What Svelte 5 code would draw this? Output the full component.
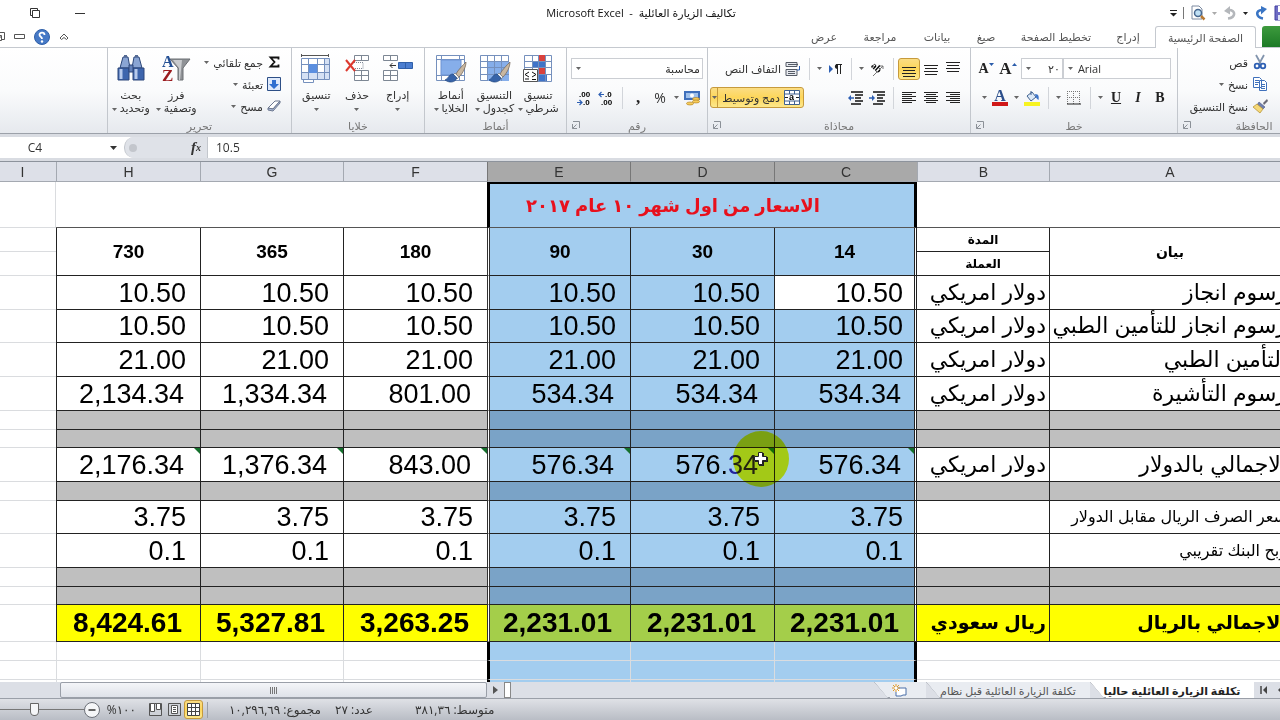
<script lang="ts">
	type Kind = 'data' | 'sum' | 'small' | 'gap' | 'total';
	type Row = { h: number; kind: Kind; label?: string; unit?: string; values?: string[]; flag?: boolean };

	const columns = [
		{ name: 'A', width: 241 },
		{ name: 'B', width: 132 },
		{ name: 'C', width: 143, selected: true },
		{ name: 'D', width: 144, selected: true },
		{ name: 'E', width: 143, selected: true },
		{ name: 'F', width: 144 },
		{ name: 'G', width: 143 },
		{ name: 'H', width: 144 }
	];

	const days = ['14', '30', '90', '180', '365', '730'];
	const usd = 'دولار امريكي';

	const rows: Row[] = [
		{ h: 34, kind: 'data', label: 'رسوم انجاز', unit: usd, values: Array(6).fill('10.50') },
		{ h: 33, kind: 'data', label: 'رسوم انجاز للتأمين الطبي', unit: usd, values: Array(6).fill('10.50') },
		{ h: 34, kind: 'data', label: 'التأمين الطبي', unit: usd, values: Array(6).fill('21.00') },
		{
			h: 34,
			kind: 'sum',
			label: 'رسوم التأشيرة',
			unit: usd,
			values: ['534.34', '534.34', '534.34', '801.00', '1,334.34', '2,134.34']
		},
		{ h: 19, kind: 'gap' },
		{ h: 18, kind: 'gap' },
		{
			h: 34,
			kind: 'sum',
			label: 'الاجمالي بالدولار',
			unit: usd,
			values: ['576.34', '576.34', '576.34', '843.00', '1,376.34', '2,176.34'],
			flag: true
		},
		{ h: 19, kind: 'gap' },
		{ h: 33, kind: 'small', label: 'سعر الصرف الريال مقابل الدولار', values: Array(6).fill('3.75') },
		{ h: 34, kind: 'small', label: 'ربح البنك تقريبي', values: Array(6).fill('0.1') },
		{ h: 19, kind: 'gap' },
		{ h: 18, kind: 'gap' },
		{
			h: 37,
			kind: 'total',
			label: 'الاجمالي بالريال',
			unit: 'ريال سعودي',
			values: ['2,231.01', '2,231.01', '2,231.01', '3,263.25', '5,327.81', '8,424.61']
		}
	];

	const tabs = [
		{ label: 'إدراج', width: 54 },
		{ label: 'تخطيط الصفحة', width: 90 },
		{ label: 'صيغ', width: 50 },
		{ label: 'بيانات', width: 48 },
		{ label: 'مراجعة', width: 66 },
		{ label: 'عرض', width: 46 }
	];

	let zoom = $state(48);
</script>

{#snippet caret()}
	<svg class="caret" width="5" height="3" viewBox="0 0 5 3"><path d="M0 0h5L2.5 3z" fill="currentColor" /></svg>
{/snippet}

{#snippet launcher()}
	<button class="launcher" aria-label="خيارات">
		<svg width="8" height="8" viewBox="0 0 8 8" fill="none" stroke="#8b9097"><path d="M1 .5h6.500V7M.5 3v4.500H5M.5 7.500 4.500 3.500" /></svg>
	</button>
{/snippet}

{#snippet lines(ends: number[][])}
	<svg width="16" height="16" viewBox="0 0 16 16" stroke="#222" stroke-width="1">
		{#each ends as [x1, x2, y]}
			<path d="M{x1} {y}.5H{x2}" />
		{/each}
	</svg>
{/snippet}

{#snippet slant()}
	<svg class="slant" width="16" height="16" viewBox="0 0 16 16"><path d="M0 0l13 15.500h3" fill="none" stroke="#9a9fa8" /></svg>
{/snippet}

{#snippet brush()}
	<path d="M31 8c-3 3-8 8-10 12l3 3c4-4 7-10 7-15z" fill="#c9b7a0" stroke="#6e6255" stroke-width=".7" />
	<path d="m20 19 4 4-2 2-4-4z" fill="#eee" stroke="#777" stroke-width=".7" />
	<path d="M18 20c-4 0-4 4-8 6 4 3 10 3 12-2z" fill="#3763a8" stroke="#234780" stroke-width=".7" />
{/snippet}

<div class="window" dir="rtl">
	<header class="titlebar">
		<div class="quick">
			<button aria-label="حفظ">
				<svg width="16" height="16" viewBox="0 0 16 16"><path d="M1 1h14v14H1z" fill="#6d6bc4" stroke="#4341a0" /><path d="M4 1h8v6H4z" fill="#fff" /><path d="M4 10h7v5H4z" fill="#dfe3f7" /></svg>
			</button>
			<button aria-label="إعادة">
				<svg width="14" height="14" viewBox="0 0 14 14"><path d="M9 12.500C2 11.500 1 4 8 4" fill="none" stroke="#3a75c4" stroke-width="2.600" /><path d="M7 0v8.500L13 3z" fill="#3a75c4" /></svg>
			</button>
			{@render caret()}
			<button aria-label="تراجع">
				<svg width="14" height="14" viewBox="0 0 14 14"><path d="M5 12.500C13 11.500 13 4 6 4" fill="none" stroke="#b4b7bb" stroke-width="2.600" /><path d="M7 0v8.500L1 5z" fill="#b4b7bb" /></svg>
			</button>
			<span class="faint">{@render caret()}</span>
			<button aria-label="معاينة قبل الطباعة">
				<svg width="16" height="16" viewBox="0 0 16 16"><path d="M2 1h7l3 3v10H2z" fill="#fff" stroke="#7c8aa0" /><circle cx="8" cy="8" r="3.500" fill="#bfe0f5" stroke="#46678f" stroke-width="1.500" /><path d="m11 11 3.500 3.500" stroke="#b87932" stroke-width="2.500" /></svg>
			</button>
			<i class="bar"></i>
			<button aria-label="تخصيص">
				<svg width="7" height="7" viewBox="0 0 7 7"><path d="M0 .5h7" stroke="#222" /><path d="M0 3h7L3.500 6.500z" fill="#222" /></svg>
			</button>
		</div>
		<h1>تكاليف الزيارة العائلية &nbsp;-&nbsp; <bdi>Microsoft Excel</bdi></h1>
		<div class="controls">
			<button aria-label="تصغير"><svg width="10" height="10" viewBox="0 0 10 10"><path d="M0 5.500h10" stroke="#333" /></svg></button>
			<button aria-label="استعادة"><svg width="10" height="10" viewBox="0 0 10 10" fill="none" stroke="#333"><path d="M2.500 2.500h7v7h-7z" /><path d="M2 7.500H.5v-7h7V2" /></svg></button>
		</div>
	</header>

	<nav class="tabs">
		<button class="file">ملف</button>
		<button class="home">الصفحة الرئيسية</button>
		{#each tabs as tab}
			<button style="width: {tab.width}px">{tab.label}</button>
		{/each}
		<div class="help">
			<button aria-label="طي الشريط"><svg width="10" height="8" viewBox="0 0 10 8" fill="#fff" stroke="#555"><path d="m1 5 4-4 4 4-1.500 1.500L5 4.500 2.500 6.500z" /></svg></button>
			<button aria-label="تعليمات">
				<svg width="16" height="16" viewBox="0 0 16 16"><circle cx="8" cy="8" r="7.500" fill="#4679c6" stroke="#2f5fa8" /><path d="M10.500 6C10.500 3 5.500 3 5.500 5.800 5.500 8 8 7.500 8 10" fill="none" stroke="#fff" stroke-width="1.800" /><circle cx="8" cy="12.500" r="1.200" fill="#fff" /></svg>
			</button>
			<button aria-label="تصغير المصنف"><svg width="11" height="5" viewBox="0 0 11 5" fill="#fff" stroke="#555"><path d="M.5.5h10v4H.5z" /></svg></button>
			<button aria-label="استعادة المصنف"><svg width="10" height="10" viewBox="0 0 10 10" fill="#fff" stroke="#555"><path d="M2.500.5h7v7h-7z" /><path d="M.5 3.500h6v5h-6zM5 3v3" /></svg></button>
		</div>
	</nav>

	<div class="ribbon">
		<section class="group clipboard">
			<div class="tools">
				<button class="paste" aria-label="لصق"></button>
				<div class="stack">
					<button class="item">
						<svg width="16" height="16" viewBox="0 0 16 16" fill="none"><path d="m4 1 5 9M12 1 7 10" stroke="#8294ad" stroke-width="1.800" /><circle cx="5" cy="12" r="2.300" stroke="#2d5fb3" stroke-width="1.800" /><circle cx="11" cy="12" r="2.300" stroke="#2d5fb3" stroke-width="1.800" /></svg>
						قص
					</button>
					<button class="item">
						<svg width="16" height="16" viewBox="0 0 16 16" fill="#fff" stroke="#3f70bb"><path d="M1.500 1.500h6l2 2v8h-8zM7.500 4.500h5l2 2v8h-7z" /><path d="M3 4.500h4M3 6.500h4M3 8.500h3M9 8.500h4M9 10.500h4M9 12.500h4" /></svg>
						نسخ {@render caret()}
					</button>
					<button class="item">
						<svg width="16" height="16" viewBox="0 0 16 16"><path d="m11 5 4-4 1 2-4 4z" fill="#6b6a75" /><path d="m7 4 6 5-2 2-6-4z" fill="#6f7fae" stroke="#4a5685" stroke-width=".6" /><path d="m5 6 6 5-3 4-7-6z" fill="#f5d876" stroke="#b08d2c" stroke-width=".7" /></svg>
						نسخ التنسيق
					</button>
				</div>
			</div>
			<footer>الحافظة{@render launcher()}</footer>
		</section>

		<section class="group font">
			<div class="tools rows">
				<div class="row">
					<label class="combo name"><select dir="ltr" aria-label="الخط"><option>Arial</option></select>{@render caret()}</label>
					<label class="combo size"><select aria-label="حجم الخط"><option>٢٠</option></select>{@render caret()}</label>
					<button class="tool serif big" dir="ltr" aria-label="تكبير الخط">A<svg width="5" height="3" viewBox="0 0 5 3"><path d="M0 3h5L2.500 0z" fill="#2b5dab" /></svg></button>
					<button class="tool serif" dir="ltr" aria-label="تصغير الخط">A<svg width="5" height="3" viewBox="0 0 5 3"><path d="M0 0h5L2.500 3z" fill="#2b5dab" /></svg></button>
				</div>
				<div class="row">
					<button class="tool serif">B</button>
					<button class="tool serif"><em>I</em></button>
					<button class="tool serif"><u>U</u></button>
					<span class="drop">{@render caret()}</span>
					<i class="sep"></i>
					<button class="tool" aria-label="حدود">
						<svg width="14" height="14" viewBox="0 0 14 14" fill="none" stroke="#777" stroke-dasharray="1 1"><path d="M.5 0v13M6.500 0v13M12.500 0v13M0 .5h13M0 6.500h13" /><path d="M0 13h14" stroke="#222" stroke-dasharray="none" /></svg>
					</button>
					<span class="drop">{@render caret()}</span>
					<i class="sep"></i>
					<button class="tool" aria-label="لون التعبئة">
						<svg width="16" height="16" viewBox="0 0 16 16"><path d="M3 6 8 2l4 5-5 4z" fill="#dce9f7" stroke="#40618f" /><path d="M7 5V1" stroke="#40618f" /><path d="M11 4c4 0 4 3 3.500 6-2-1-3-3-3.500-6z" fill="#3c74c8" /><path d="M0 12h16v4H0z" fill="#f7f321" /></svg>
					</button>
					<span class="drop">{@render caret()}</span>
					<button class="tool colour" aria-label="لون الخط">A</button>
					<span class="drop">{@render caret()}</span>
				</div>
			</div>
			<footer>خط{@render launcher()}</footer>
		</section>

		<section class="group align">
			<div class="tools">
				<div class="rows">
					<div class="row">
						<button class="tool" aria-label="محاذاة للأعلى">{@render lines([[1, 15, 1], [2, 14, 4], [1, 15, 7], [2, 14, 10]])}</button>
						<button class="tool" aria-label="محاذاة للوسط">{@render lines([[1, 15, 4], [2, 14, 7], [1, 15, 10], [2, 14, 13]])}</button>
						<button class="tool active" aria-label="محاذاة للأسفل">{@render lines([[1, 15, 6], [2, 14, 9], [1, 15, 12], [2, 14, 15]])}</button>
						<i class="sep"></i>
						<button class="tool" aria-label="الاتجاه"><svg width="16" height="16" viewBox="0 0 16 16"><text x="1" y="9" font-size="10" font-weight="700" font-family="Liberation Serif" transform="rotate(42 6 8)">ab</text><path d="m4 15 10-10M14 5v3M14 5h-3" stroke="#777" fill="none" /></svg></button>
						<span class="drop">{@render caret()}</span>
						<i class="sep"></i>
						<button class="tool" aria-label="اتجاه النص"><svg width="16" height="16" viewBox="0 0 16 16"><path d="M2 4v8l4-4z" fill="#2d5fb3" /><path d="M10.500 3v10M13.500 3v10M9 3.500h6" stroke="#222" /><path d="M10.500 3C7 3 7 8 10.500 8z" fill="#222" /></svg></button>
						<span class="drop">{@render caret()}</span>
						<i class="sep"></i>
					</div>
					<div class="row">
						<button class="tool" aria-label="يمين">{@render lines([[1, 15, 2], [5, 15, 4], [1, 15, 6], [5, 15, 8], [1, 15, 10], [5, 15, 12]])}</button>
						<button class="tool" aria-label="توسيط">{@render lines([[1, 15, 2], [3, 13, 4], [1, 15, 6], [3, 13, 8], [1, 15, 10], [3, 13, 12]])}</button>
						<button class="tool" aria-label="يسار">{@render lines([[1, 15, 2], [1, 11, 4], [1, 15, 6], [1, 11, 8], [1, 15, 10], [1, 11, 12]])}</button>
						<i class="sep"></i>
						<button class="tool" aria-label="إنقاص المسافة"><svg width="16" height="14" viewBox="0 0 16 14" stroke="#111" stroke-width="1.500"><path d="M4 1h12M8 4h8M8 7h6M8 10h8M4 13h10" /><path d="M0 7h3" stroke="#2d5fb3" /><path d="m3 4 3 3-3 3z" fill="#2d5fb3" stroke="none" /></svg></button>
						<button class="tool" aria-label="زيادة المسافة"><svg width="16" height="14" viewBox="0 0 16 14" stroke="#111" stroke-width="1.500"><path d="M4 1h12M8 4h8M8 7h6M8 10h8M4 13h10" /><path d="M3 7h4" stroke="#2d5fb3" /><path d="M4 4 1 7l3 3z" fill="#2d5fb3" stroke="none" /></svg></button>
					</div>
				</div>
				<div class="rows wide">
					<button class="item">
						<svg width="16" height="16" viewBox="0 0 16 16"><path d="M1 1.500h11v4H1zM1 8.500h11v6H1z" fill="#e8ebf0" stroke="#555b66" /><path d="M3 3.500h10M3 10.500h7M3 12.500h7" stroke="#555b66" /><path d="M14.500 5v4H12" fill="none" stroke="#2d5fb3" /></svg>
						التفاف النص
					</button>
					<button class="item active">
						<svg width="16" height="16" viewBox="0 0 16 16"><path d="M.5.5h15v14H.5z" fill="#fff" stroke="#40618f" /><path d="M.5 4h15M.5 11h15M5.500 1v3M10.500 1v3M5.500 11v4M10.500 11v4" stroke="#40618f" /><path d="M1 7.500h3M12 7.500h3" stroke="#222" /><text x="5" y="10" font-size="9" font-weight="700" font-family="Liberation Sans">a</text></svg>
						دمج وتوسيط
						<span class="split">{@render caret()}</span>
					</button>
				</div>
			</div>
			<footer>محاذاة{@render launcher()}</footer>
		</section>

		<section class="group number">
			<div class="tools rows">
				<label class="combo format"><select aria-label="تنسيق الأرقام"><option>محاسبة</option></select>{@render caret()}</label>
				<div class="row">
					<button class="tool" aria-label="تنسيق العملة"><svg width="16" height="16" viewBox="0 0 16 16"><path d="M0 1h16v9H0z" fill="#3f6fbb" /><path d="M2 3h12v5H2z" fill="#9fc0ea" /><circle cx="8" cy="5.500" r="2" fill="#fff" /><ellipse cx="12" cy="9" rx="3.500" ry="1.500" fill="#f7cc5b" stroke="#a97918" stroke-width=".6" /><ellipse cx="12" cy="11.500" rx="3.500" ry="1.500" fill="#f7cc5b" stroke="#a97918" stroke-width=".6" /><ellipse cx="6" cy="13.500" rx="3.500" ry="1.500" fill="#f7cc5b" stroke="#a97918" stroke-width=".6" /></svg></button>
					<span class="drop">{@render caret()}</span>
					<button class="tool percent">%</button>
					<button class="tool serif big">,</button>
					<i class="sep"></i>
					<button class="tool" aria-label="زيادة المنازل العشرية">
						<svg width="18" height="16" viewBox="0 0 18 16"><path d="M7 4.500H2M4.500 2 2 4.500 4.500 7" fill="none" stroke="#2d5fb3" stroke-width="1.200" /><text x="8" y="7" font-size="8" font-weight="700" font-family="Liberation Sans">.0</text><text x="4" y="15" font-size="8" font-weight="700" font-family="Liberation Sans">.00</text></svg>
					</button>
					<button class="tool" aria-label="إنقاص المنازل العشرية">
						<svg width="18" height="16" viewBox="0 0 18 16"><path d="M2 12.500h5M4.500 10 7 12.500 4.500 15" fill="none" stroke="#2d5fb3" stroke-width="1.200" /><text x="4" y="7" font-size="8" font-weight="700" font-family="Liberation Sans">.00</text><text x="8" y="15" font-size="8" font-weight="700" font-family="Liberation Sans">.0</text></svg>
					</button>
				</div>
			</div>
			<footer>رقم{@render launcher()}</footer>
		</section>

		<section class="group styles">
			<div class="tools">
				<button class="large">
					<svg width="30" height="30" viewBox="0 0 30 30"><path d="M1.500 1.500h27v26h-27z" fill="#fff" stroke="#7590bd" /><path d="M16 1h6v6h-6zM16 14h6v6h-6z" fill="#d9413c" /><path d="M9 8h13v6H9zM16 20h8v7h-8z" fill="#3f74c9" /><path d="M1 7.500h28M1 13.500h28M1 20.500h28M9.500 1v27M15.500 1v27M22.500 1v27" stroke="#7590bd" fill="none" /><path d="M.5 15.500h14v12H.5z" fill="#fff" stroke="#555" /><path d="m6 18-4 2.500L6 23M2 25h4M9 18l4 2.500L9 23M9 25.500h4" fill="none" stroke="#111" /></svg>
					<span>تنسيق<br />شرطي {@render caret()}</span>
				</button>
				<button class="large">
					<svg width="32" height="30" viewBox="0 0 32 30"><path d="M1.500 1.500h28v25h-28z" fill="#fff" stroke="#7590bd" /><path d="M8 7h22v20H8z" fill="#86aeea" /><path d="M1 7.500h29M1 13.500h29M1 20.500h29M8.500 1v26M15.500 1v26M22.500 1v26" stroke="#7590bd" />{@render brush()}</svg>
					<span>التنسيق<br />كجدول {@render caret()}</span>
				</button>
				<button class="large">
					<svg width="32" height="30" viewBox="0 0 32 30"><path d="M1.500 1.500h28v25h-28z" fill="#fff" stroke="#7590bd" /><path d="M1 5.500h29M1 21.500h29M6.500 1v26M24.500 1v26" stroke="#7590bd" /><path d="M6 6h20v15H6z" fill="#86aeea" stroke="#6c92d2" />{@render brush()}</svg>
					<span>أنماط<br />الخلايا {@render caret()}</span>
				</button>
			</div>
			<footer>أنماط</footer>
		</section>

		<section class="group cells">
			<div class="tools">
				<button class="large">
					<svg width="30" height="30" viewBox="0 0 30 30" fill="#fff" stroke="#7d8794"><path d="M.5 1.500h14v5H.5zM7.500 1.500v5M.5 16.500h14v10H.5zM7.500 16.500v10M.5 21.500h14" /><path d="M15.500 8.500h14v6h-14zM22.500 8v6" fill="#4a7dd0" stroke="#2f5fa8" /><path d="M13 11.500H7M9.500 9 7 11.500 9.500 14" fill="none" stroke="#333" /></svg>
					<span>إدراج<br />{@render caret()}</span>
				</button>
				<button class="large">
					<svg width="26" height="30" viewBox="0 0 26 30" fill="#fff" stroke="#7d8794"><path d="M10.500 1.500h14v5h-14zM17.500 1.500v5M10.500 16.500h14v10h-14zM17.500 16.500v10M10.500 21.500h14" /><path d="M10 8.500h9v6h-9" stroke-dasharray="1 1" /><path d="m2 6 9 11M11 6 2 17" stroke="#dd3a30" stroke-width="2" /></svg>
					<span>حذف<br />{@render caret()}</span>
				</button>
				<button class="large">
					<svg width="32" height="30" viewBox="0 0 32 30" fill="#fff" stroke="#7590bd"><path d="M1.500 4.500h28v21h-28zM3.500 25.500v3h10v-3" /><path d="M24 5h5v20h-5zM2 19h27v6H2z" fill="#d5e1f4" stroke="none" /><path d="M1 10.500h28M1 18.500h28M8.500 4v22M17.500 4v22M24.500 4v22" /><path d="M9 10h8v9H9z" fill="#5b8fe0" stroke="none" /><path d="M2 1.500h26M1.500 0v3M28.500 0v3" stroke="#555" /></svg>
					<span>تنسيق<br />{@render caret()}</span>
				</button>
			</div>
			<footer>خلايا</footer>
		</section>

		<section class="group editing">
			<div class="tools">
				<div class="stack">
					<button class="item">
						<svg width="14" height="14" viewBox="0 0 14 14"><path d="M11.500 4.500V2.500H3.500L7.500 7l-4 4.500h8v-2" fill="none" stroke="#111" stroke-width="1.800" /></svg>
						جمع تلقائي {@render caret()}
					</button>
					<button class="item">
						<svg width="14" height="14" viewBox="0 0 14 14"><path d="M.5.5h13v13H.5z" fill="#dfeafb" stroke="#2d4f86" /><path d="M5 3h4v4h3l-5 5-5-5h3z" fill="#2f6fd0" /></svg>
						تعبئة {@render caret()}
					</button>
					<button class="item">
						<svg width="14" height="14" viewBox="0 0 14 14"><path d="m1 9 7-7h5l-7 8z" fill="#fff" stroke="#6d7890" /><path d="M1 9v2l5 1 7-8V2L6 10z" fill="#a9b8d6" stroke="#6d7890" /></svg>
						مسح {@render caret()}
					</button>
				</div>
				<button class="large">
					<svg width="30" height="30" viewBox="0 0 30 30"><path d="M9 5h20l-7 9v12h-5V14z" fill="#8f9296" stroke="#6b6e72" /><path d="M12 6h9l-2 20h-1V14z" fill="#c9cbce" /><text x="1" y="13" font-size="16" font-weight="700" font-family="Liberation Serif" fill="#234f94">A</text><text x="1" y="27" font-size="17" font-weight="700" font-family="Liberation Serif" fill="#9b1b1f">Z</text></svg>
					<span>فرز<br />وتصفية {@render caret()}</span>
				</button>
				<button class="large">
					<svg width="28" height="30" viewBox="0 0 28 30" stroke="#2c477a"><path d="M6 3h5l2 11H3zM17 3h5l3 11H15z" fill="#8aa5d4" /><path d="M1 14h11v12H1zM16 14h11v12H16z" fill="#3d65ad" /><path d="M12 11h4v7h-4z" fill="#6482bb" /><path d="M4 15v10M19 15v10" stroke="#b7caec" stroke-width="3" /><path d="M7 2h3M18 2h3" stroke="#566b94" stroke-width="2" /></svg>
					<span>بحث<br />وتحديد {@render caret()}</span>
				</button>
			</div>
			<footer>تحرير</footer>
		</section>
	</div>

	<div class="formula" dir="ltr">
		<input class="cellname" value="C4" aria-label="مربع الاسم" />
		<button class="namedrop" aria-label="الأسماء"><svg width="7" height="4" viewBox="0 0 7 4"><path d="M0 0h7L3.500 4z" fill="#333" /></svg></button>
		<div class="fx"><i class="knob"></i><button aria-label="إدراج دالة">f<sub>x</sub></button></div>
		<input class="value" value="10.5" aria-label="شريط الصيغة" />
	</div>

	<main class="sheet">
		<table>
			<colgroup>
				<col class="rownum" />
				{#each columns as col}
					<col style="width: {col.width}px" />
				{/each}
				<col />
			</colgroup>
			<thead>
				<tr>
					<th></th>
					{#each columns as col}
						<th class:picked={col.selected}>{col.name}</th>
					{/each}
					<th>I</th>
				</tr>
			</thead>
			<tbody>
				<tr class="top">
					<th>1</th>
					<td colspan="2" class="under"></td>
					<td colspan="3" class="under sel caption first last solid">الاسعار من اول شهر ١٠ عام ٢٠١٧</td>
					<td colspan="3" class="under"></td>
					<td class="free edge"></td>
				</tr>
				<tr class="half">
					<th>2</th>
					<td rowspan="2" class="box head">بيان</td>
					<td class="box unit head sub">المدة</td>
					{#each days as day, i}
						<td rowspan="2" class="box days" class:sel={i < 3} class:first={i === 0} class:last={i === 2}>{day}</td>
					{/each}
					<td class="free"></td>
				</tr>
				<tr class="half">
					<th>3</th>
					<td class="box unit head sub">العملة</td>
					<td class="free"></td>
				</tr>
				{#each rows as row, r}
					<tr class={row.kind} style="height: {row.h}px">
						<th>{r + 4}</th>
						<td class="box text">{row.label ?? ''}</td>
						<td class="box unit text">{row.unit ?? ''}</td>
						{#each days as _, i}
							<td
								class="box num"
								class:sel={i < 3}
								class:first={i === 0}
								class:last={i === 2}
								class:current={r === 0 && i === 0}
								class:flag={row.flag}
							>
								{#if row.flag && i === 1}576.<span class="lit">34</span>{:else}{row.values?.[i] ?? ''}{/if}
							</td>
						{/each}
						<td class="free"></td>
					</tr>
				{/each}
				{#each [17, 18, 19] as n}
					<tr class="blank">
						<th>{n}</th>
						<td class="free"></td>
						<td class="free edge unit"></td>
						{#each days as _, i}
							<td class="free edge" class:sel={i < 3} class:solid={i < 3} class:first={i === 0} class:last={i === 2}></td>
						{/each}
						<td class="free edge"></td>
					</tr>
				{/each}
			</tbody>
		</table>
		<i class="halo"></i>
		<svg class="cursor" width="16" height="16" viewBox="0 0 16 16"><path d="M6 2h5v4h4v5h-4v4H6v-4H2V6h4z" fill="#222" /><path d="M5.500 1.500h4v4h4v4h-4v4h-4v-4h-4v-4h4z" fill="#fff" stroke="#222" /></svg>
	</main>

	<div class="bottom">
		<div class="sheetnav">
			<button aria-label="السابق"><svg width="8" height="8" viewBox="0 0 8 8"><path d="M6 0v8L2 4z" fill="#444" /></svg></button>
			<button aria-label="الأخير"><svg width="8" height="8" viewBox="0 0 8 8"><path d="M1 0v8" stroke="#444" stroke-width="1.500" /><path d="M7 0v8L3 4z" fill="#444" /></svg></button>
		</div>
		<button class="sheettab on">تكلفة الزيارة العائلية حاليا{@render slant()}</button>
		<button class="sheettab">تكلفة الزيارة العائلية قبل نظام{@render slant()}</button>
		<button class="sheettab new" aria-label="ورقة جديدة">
			<svg width="16" height="13" viewBox="0 0 16 13"><path d="M5 4h9v7h-3l-2 1H4V8" fill="#fff" stroke="#4a6ea8" /><path d="M4 0v8M0 4h8M1 1l6 6M7 1 1 7" stroke="#e29a28" /><circle cx="4" cy="4" r="1.500" fill="#fff" /></svg>
			{@render slant()}
		</button>
		<div class="scroll">
			<i class="splitter"></i>
			<button aria-label="تمرير"><svg width="5" height="8" viewBox="0 0 5 8"><path d="M0 0v8l5-4z" fill="#555" /></svg></button>
			<button class="thumb" aria-label="شريط التمرير"><svg width="7" height="7" viewBox="0 0 7 7"><path d="M.5 0v7M2.500 0v7M4.500 0v7M6.500 0v7" stroke="#777" /></svg></button>
		</div>
	</div>

	<footer class="status" dir="ltr">
		<input type="range" bind:value={zoom} aria-label="تكبير/تصغير" />
		<button class="minus" aria-label="تصغير العرض"><svg width="16" height="16" viewBox="0 0 16 16"><circle cx="8" cy="8" r="7.500" fill="#f5f6f8" stroke="#6c7078" /><path d="M4.500 8h7" stroke="#333" stroke-width="1.500" /></svg></button>
		<span class="percentage" dir="rtl">١٠٠%</span>
		<button class="view" aria-label="فواصل الصفحات"><svg width="13" height="13" viewBox="0 0 13 13" fill="#fff" stroke="#555"><path d="M.5.500h12v12H.5z" fill="#cfd2d8" /><path d="M1.500.500h4v8h-4zM7.500.500h4v6h-4z" /></svg></button>
		<button class="view" aria-label="تخطيط"><svg width="13" height="13" viewBox="0 0 13 13" fill="#fff" stroke="#555"><path d="M.5.500h12v12H.5z" fill="#cfd2d8" /><path d="M3.500 2.500h6v8h-6zM5 4.500h3M5 6.500h3M5 8.500h3" /></svg></button>
		<button class="view active" aria-label="عادي"><svg width="13" height="13" viewBox="0 0 13 13" fill="#fff" stroke="#444"><path d="M.5.500h12v12H.5zM4.500.500v12M8.500.500v12M.5 4.500h12M.5 8.500h12" /></svg></button>
		<i class="bar"></i>
		<span class="total-sum" dir="rtl">مجموع: ١٠,٢٩٦,٦٩</span>
		<span class="count" dir="rtl">عدد: ٢٧</span>
		<span dir="rtl">متوسط: ٣٨١,٣٦</span>
	</footer>
</div>

<style>
	:global(body) {
		overflow: hidden;
		font-family: 'Open Sans', 'DejaVu Sans', sans-serif;
		font-size: 11px;
		line-height: 13px;
		color: #333;
	}

	.window {
		display: flex;
		flex-direction: column;
		height: 100vh;
		margin: 0 -50px 0 -12px;
		background: #fff;
	}

	button,
	input,
	select {
		box-sizing: border-box;
		margin: 0;
		padding: 0;
		border: 0;
		background: none;
		color: inherit;
		font: inherit;
		appearance: none;
	}

	button {
		display: flex;
		align-items: center;
		justify-content: center;
		white-space: nowrap;
	}

	svg {
		flex: none;
		display: block;
		direction: ltr;
	}

	.caret {
		color: #666;
	}

	/* title bar */
	.titlebar {
		display: grid;
		grid-template-columns: 1fr auto 1fr;
		align-items: center;
		height: 26px;
		padding-right: 36px;
		flex: none;
	}

	.quick {
		display: flex;
		align-items: center;
		gap: 6px;
		height: 22px;
		padding-right: 4px;
	}

	.quick .caret {
		color: #222;
	}

	.quick .faint .caret {
		color: #aaa;
	}

	.quick .bar {
		width: 1px;
		height: 12px;
		background: #777;
	}

	h1 {
		margin: 0;
		font-size: 11px;
		line-height: 16px;
		font-weight: 400;
		color: #111;
	}

	.controls {
		display: flex;
		justify-content: flex-end;
		gap: 35px;
		padding-left: 42px;
	}

	/* ribbon tabs */
	.tabs {
		display: flex;
		align-items: stretch;
		box-sizing: border-box;
		height: 22px;
		flex: none;
		color: #555;
		border-bottom: 1px solid #c5c9cf;
	}

	.tabs .file {
		width: 68px;
		margin-left: 6px;
		background: linear-gradient(#3d9a3d, #1c7a26);
		border-radius: 3px 3px 0 0;
		color: #fff;
	}

	.tabs .home {
		width: 101px;
		margin-bottom: -1px;
		border: 1px solid #c5c9cf;
		border-bottom: 0;
		border-radius: 3px 3px 0 0;
		background: #fff;
	}

	.help {
		display: flex;
		align-items: center;
		gap: 9px;
		margin-right: auto;
		padding-left: 7px;
	}

	/* ribbon */
	.ribbon {
		display: flex;
		box-sizing: border-box;
		height: 86px;
		flex: none;
		background: linear-gradient(#fff 0%, #fafbfc 50%, #e6e9ee 100%);
		border-bottom: 1px solid #9ca1a9;
	}

	.group {
		display: flex;
		flex-direction: column;
		box-sizing: border-box;
		border-left: 1px solid #c3c7cd;
	}

	.group footer {
		display: flex;
		align-items: center;
		justify-content: center;
		position: relative;
		height: 16px;
		color: #777;
	}

	.launcher {
		position: absolute;
		left: 5px;
		top: 4px;
	}

	.tools {
		display: flex;
		flex: 1;
		padding: 3px 6px 0 4px;
	}

	.rows {
		display: flex;
		flex-direction: column;
		gap: 8px;
		padding-top: 10px;
	}

	.row {
		display: flex;
		align-items: center;
		height: 21px;
	}

	.align .rows {
		padding-top: 7px;
	}

	.stack {
		display: flex;
		flex-direction: column;
		align-items: flex-start;
	}

	.item {
		gap: 4px;
		height: 22px;
	}

	.clipboard {
		width: 153px;
	}

	.paste {
		width: 44px;
		height: 64px;
		margin-left: 12px;
		border: 1px solid #d9a84e;
		background: #f3dfa6;
	}

	.font {
		width: 207px;
	}

	.align {
		width: 263px;
	}

	.number {
		width: 141px;
	}

	.styles {
		width: 142px;
	}

	.cells {
		width: 133px;
	}

	.editing {
		width: 184px;
	}

	.tool {
		flex: none;
		width: 22px;
		height: 22px;
	}

	.drop {
		display: flex;
		justify-content: center;
		width: 10px;
	}

	.sep {
		display: flex;
		justify-content: center;
		width: 10px;
	}

	.sep::before {
		content: '';
		width: 1px;
		height: 22px;
		background: #d2d5da;
	}

	.active {
		border: 1px solid #c69a3c;
		border-radius: 3px;
		background: linear-gradient(#fbdd84, #fdd65a 50%, #fde88c);
	}

	.serif {
		font-family: 'Liberation Serif', serif;
		font-size: 14px;
		font-weight: 700;
		color: #222;
	}

	.serif svg {
		align-self: flex-start;
		margin-top: 5px;
	}

	.big {
		font-size: 17px;
	}

	.colour {
		height: 17px;
		width: 16px;
		margin: 0 3px;
		border-bottom: 4px solid #d01818;
		font-family: 'Liberation Serif', serif;
		font-size: 16px;
		font-weight: 700;
		color: #2c4f8c;
	}

	.percent {
		font-size: 14px;
	}

	.combo {
		position: relative;
		height: 21px;
	}

	.combo select {
		width: 100%;
		height: 100%;
		padding: 0 2px;
		border: 1px solid #cbced3;
		background: #fff;
	}

	.combo .caret {
		position: absolute;
		left: 5px;
		top: 9px;
	}

	.name {
		width: 111px;
	}

	.combo.name select {
		padding-left: 14px;
	}

	.size {
		width: 43px;
		margin-left: 2px;
	}

	.format {
		width: 132px;
	}

	.number .tools {
		padding-right: 4px;
	}

	.wide {
		width: 94px;
	}

	.wide .item {
		justify-content: flex-start;
		width: 100%;
		padding: 0 3px;
		height: 21px;
	}

	.split {
		display: flex;
		align-items: center;
		justify-content: center;
		height: 100%;
		width: 10px;
		margin-right: auto;
		border-right: 1px solid #c69a3c;
	}

	.large {
		flex: 1;
		flex-direction: column;
		justify-content: flex-start;
		gap: 4px;
		padding-top: 3px;
	}

	.large .caret {
		display: inline-block;
		vertical-align: middle;
	}

	.editing .tools {
		padding: 3px 10px 0 0;
	}

	.editing .stack {
		width: 82px;
	}

	/* formula bar */
	.formula {
		display: flex;
		height: 21px;
		flex: none;
		border: solid #d9dce2;
		border-width: 3px 0;
		font-size: 12px;
		color: #333;
	}

	.cellname {
		width: 94px;
		text-align: center;
	}

	.namedrop {
		width: 42px;
		padding-left: 20px;
	}

	.fx {
		display: flex;
		align-items: center;
		justify-content: space-between;
		box-sizing: border-box;
		width: 84px;
		padding: 0 6px 0 4px;
		border: 1px solid #c3c7cd;
		border-width: 0 1px;
		border-radius: 10px 0 0 10px;
		background: #dfe2e8;
	}

	.knob {
		width: 8px;
		height: 8px;
		border-radius: 4px;
		background: #c3c6cc;
	}

	.fx button {
		font-family: 'Liberation Serif', serif;
		font-size: 15px;
		font-style: italic;
		font-weight: 700;
	}

	.fx sub {
		font-size: 10px;
	}

	.value {
		flex: 1;
		padding-left: 8px;
	}

	/* worksheet */
	.sheet {
		position: relative;
		flex: 1;
		min-height: 0;
		overflow: hidden;
	}

	table {
		table-layout: fixed;
		width: 100%;
		border-spacing: 0;
		border-top: 1px solid #8d939c;
		color: #000;
		font-family: 'Liberation Sans', 'DejaVu Sans', sans-serif;
	}

	.rownum {
		width: 40px;
	}

	th {
		padding: 0;
		border: solid #a4a9b1;
		border-width: 0 0 1px 1px;
		background: #dde0e8;
		font-size: 14px;
		line-height: 16px;
		font-weight: 400;
		color: #333;
	}

	thead th {
		height: 19px;
	}

	.picked {
		background: #a9a9a9;
		border-left-color: #777;
	}

	td {
		position: relative;
		padding: 0;
		line-height: 16px;
		white-space: nowrap;
	}

	.top {
		height: 46px;
	}

	.half {
		height: 24px;
	}

	.blank {
		height: 19px;
	}

	.box {
		border: solid #222;
		border-width: 0 0 1px 1px;
	}

	.free {
		border-bottom: 1px solid #dadcdf;
	}

	.edge {
		border-left: 1px solid #dadcdf;
	}

	.top .edge {
		border-left: 0;
		border-right: 1px solid #dadcdf;
	}

	.unit {
		border-left: 0;
	}

	.under {
		border-bottom: 1px solid #555;
	}

	.sel {
		background: #a3cdef padding-box;
	}

	.first {
		border-right: 3px double #222;
	}

	.last {
		border-left: 3px double #333;
	}

	.solid.first {
		border-right: 3px solid #000;
	}

	.solid.last {
		border-left: 3px solid #000;
	}

	.caption {
		border-top: 2px solid #000;
		padding-right: 58px;
		color: #e8101c;
		font-size: 18px;
		font-weight: 700;
		text-align: center;
	}

	.head {
		font-size: 14px;
		font-weight: 700;
		text-align: center;
	}

	.sub {
		font-size: 12px;
	}

	.days {
		font-size: 19px;
		font-weight: 700;
		text-align: center;
	}

	.text {
		padding-right: 3px;
		font-size: 22px;
		text-align: right;
	}

	.num {
		padding-right: 14px;
		font-size: 27px;
		text-align: right;
	}

	.first.num {
		padding-right: 11px;
	}

	.sum .num {
		padding-right: 16px;
	}

	.sum .first.num {
		padding-right: 13px;
	}

	.small .text {
		font-size: 16px;
	}

	.gap .box {
		background-color: #bfbfbf;
	}

	.gap .sel {
		background-color: #7aa3c7;
	}

	.total .box {
		background-color: #ff0;
		font-weight: 700;
	}

	.total .text {
		font-size: 19px;
	}

	.total .sel {
		background-color: #a4ce4a;
	}

	.total .num {
		padding-right: 18px;
		font-size: 28px;
	}

	.total .first.num {
		padding-right: 15px;
	}

	.data .current {
		background: #fff;
	}

	.flag::after {
		content: '';
		position: absolute;
		top: 0;
		right: 0;
		border: solid transparent;
		border-width: 0 0 6px 6px;
		border-right: 6px solid #14702c;
		border-left: 0;
	}

	.lit {
		color: #23239a;
	}

	.halo {
		position: absolute;
		left: 745px;
		top: 270px;
		width: 56px;
		height: 56px;
		border-radius: 28px;
		background: #fffb18;
		mix-blend-mode: multiply;
	}

	.cursor {
		position: absolute;
		left: 765px;
		top: 290px;
	}

	/* sheet tabs and scroll bar */
	.bottom {
		display: flex;
		height: 16px;
		flex: none;
		background: #dcdfe6;
		border-bottom: 1px solid #9a9fa8;
		color: #555;
	}

	.sheetnav {
		display: flex;
		justify-content: flex-end;
		gap: 8px;
		width: 70px;
		padding-left: 6px;
	}

	.sheettab {
		position: relative;
		width: 164px;
		clip-path: polygon(0 0, 100% 0, 100% 100%, 14px 100%);
		background: #e9ecf1;
	}

	.sheettab.on {
		background: #fff;
		color: #222;
		font-weight: 700;
	}

	.sheettab.new {
		width: 52px;
	}

	.slant {
		position: absolute;
		left: 0;
		top: 0;
	}

	.scroll {
		display: flex;
		flex: 1;
		gap: 6px;
	}

	.splitter {
		box-sizing: border-box;
		width: 7px;
		margin-right: auto;
		border: 1px solid #888;
		background: #fff;
	}

	.thumb {
		width: 427px;
		margin-left: 72px;
		border: 1px solid #9a9fa8;
		border-radius: 2px;
		background: linear-gradient(#f4f5f8, #dfe2e9);
	}

	/* status bar */
	.status {
		display: flex;
		align-items: center;
		height: 21px;
		flex: none;
		background: linear-gradient(#dfe1e6, #b9bdc5);
		font-size: 12px;
		white-space: nowrap;
	}

	.status input {
		width: 96px;
		height: 14px;
		background: linear-gradient(#777, #777) center / 100% 1px no-repeat;
	}

	.status input::-webkit-slider-thumb {
		appearance: none;
		width: 9px;
		height: 13px;
		border: 1px solid #666;
		border-radius: 1px 1px 5px 5px;
		background: #f5f6f8;
	}

	.percentage {
		width: 28px;
		padding: 0 10px 0 8px;
	}

	.view {
		width: 19px;
		height: 19px;
	}

	.status .bar {
		width: 1px;
		height: 16px;
		margin: 0 22px 0 4px;
		background: #9a9fa8;
	}

	.total-sum {
		width: 91px;
		margin-right: 15px;
	}

	.count {
		width: 37px;
		margin-right: 42px;
	}
</style>
